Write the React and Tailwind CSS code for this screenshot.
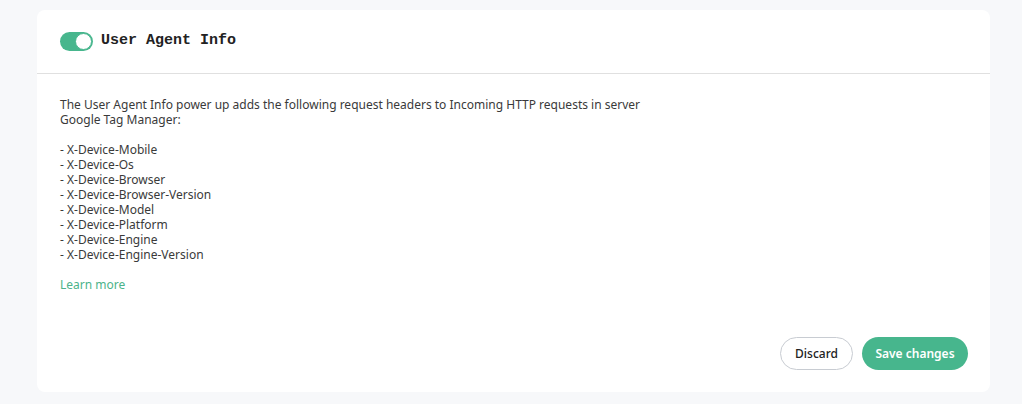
import React, { useState } from 'react'

const headers = [
    'X-Device-Mobile',
    'X-Device-Os',
    'X-Device-Browser',
    'X-Device-Browser-Version',
    'X-Device-Model',
    'X-Device-Platform',
    'X-Device-Engine',
    'X-Device-Engine-Version',
];

const App = () => {
    const [enabled, setEnabled] = useState(true);

    return (
        <div className="min-h-screen bg-[#f7f8fa] pt-[10px] pl-[37px] pr-[32px] pb-[12px]" style={{ fontFamily: '"Noto Sans", sans-serif' }}>
            <div className="w-[953px] h-[382px] bg-white rounded-[8px] flex flex-col">
                {/* Header with toggle */}
                <div className="h-[64px] flex items-center gap-[8px] px-[23px] border-b border-[#e0e0e0]">
                    <button
                        onClick={() => setEnabled(!enabled)}
                        className={`w-[33px] h-[19px] rounded-full flex items-center p-[1px] ${enabled ? 'bg-[#47b68d] justify-end' : 'bg-gray-300 justify-start'}`}
                    >
                        <span className="w-[17px] h-[17px] rounded-full bg-white border border-[#47b68d]"></span>
                    </button>
                    <h3 className="text-[15px] font-bold text-[#222]" style={{ fontFamily: '"Liberation Mono", monospace' }}>
                        User Agent Info
                    </h3>
                </div>

                {/* Body */}
                <div className="flex-1 flex flex-col pl-[23px] pr-[22px] pt-[23px] pb-[22px]">
                    <div className="text-[12px] leading-[15px] text-[#3a3a3a]">
                        <p>The User Agent Info power up adds the following request headers to Incoming HTTP requests in server<br />Google Tag Manager:</p>
                        <ul className="mt-[15px]">
                            {headers.map((h) => (
                                <li key={h}>- {h}</li>
                            ))}
                        </ul>
                        <a href="#" className="inline-block mt-[15px] text-[#4cb38a]">Learn more</a>
                    </div>

                    <div className="mt-auto flex justify-end gap-[9px]">
                        <button className="h-[33px] w-[73px] rounded-full border border-[#c8ccd2] bg-white text-[12px] font-medium text-[#222]">
                            Discard
                        </button>
                        <button className="h-[33px] w-[106px] rounded-full bg-[#47b68d] text-[12px] font-semibold text-white">
                            Save changes
                        </button>
                    </div>
                </div>
            </div>
        </div>
    )
}

export default App
